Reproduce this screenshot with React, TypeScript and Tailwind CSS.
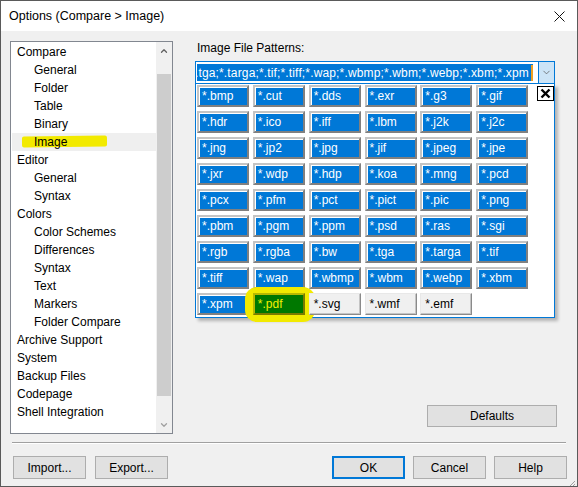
import { ChevronDown, ChevronUp } from "lucide-react";

const font = { fontFamily: '"Liberation Sans", Arial, sans-serif' };

interface TreeItem {
  label: string;
  child?: boolean;
  selected?: boolean;
}

const treeItems: TreeItem[] = [
  { label: "Compare" },
  { label: "General", child: true },
  { label: "Folder", child: true },
  { label: "Table", child: true },
  { label: "Binary", child: true },
  { label: "Image", child: true, selected: true },
  { label: "Editor" },
  { label: "General", child: true },
  { label: "Syntax", child: true },
  { label: "Colors" },
  { label: "Color Schemes", child: true },
  { label: "Differences", child: true },
  { label: "Syntax", child: true },
  { label: "Text", child: true },
  { label: "Markers", child: true },
  { label: "Folder Compare", child: true },
  { label: "Archive Support" },
  { label: "System" },
  { label: "Backup Files" },
  { label: "Codepage" },
  { label: "Shell Integration" },
];

type Kind = "on" | "off" | "pdf";

const patterns: [string, Kind][] = [
  ["*.bmp", "on"], ["*.cut", "on"], ["*.dds", "on"], ["*.exr", "on"], ["*.g3", "on"], ["*.gif", "on"],
  ["*.hdr", "on"], ["*.ico", "on"], ["*.iff", "on"], ["*.lbm", "on"], ["*.j2k", "on"], ["*.j2c", "on"],
  ["*.jng", "on"], ["*.jp2", "on"], ["*.jpg", "on"], ["*.jif", "on"], ["*.jpeg", "on"], ["*.jpe", "on"],
  ["*.jxr", "on"], ["*.wdp", "on"], ["*.hdp", "on"], ["*.koa", "on"], ["*.mng", "on"], ["*.pcd", "on"],
  ["*.pcx", "on"], ["*.pfm", "on"], ["*.pct", "on"], ["*.pict", "on"], ["*.pic", "on"], ["*.png", "on"],
  ["*.pbm", "on"], ["*.pgm", "on"], ["*.ppm", "on"], ["*.psd", "on"], ["*.ras", "on"], ["*.sgi", "on"],
  ["*.rgb", "on"], ["*.rgba", "on"], ["*.bw", "on"], ["*.tga", "on"], ["*.targa", "on"], ["*.tif", "on"],
  ["*.tiff", "on"], ["*.wap", "on"], ["*.wbmp", "on"], ["*.wbm", "on"], ["*.webp", "on"], ["*.xbm", "on"],
  ["*.xpm", "on"], ["*.pdf", "pdf"], ["*.svg", "off"], ["*.wmf", "off"], ["*.emf", "off"],
];

const comboText = patterns
  .filter(([, k]) => k === "on")
  .map(([p]) => p)
  .join(";");

function PatternButton({ label, kind }: { label: string; kind: Kind }) {
  if (kind === "pdf") {
    return (
      <div className="relative h-[22px] w-[52px]">
        <div className="absolute -left-[8px] -right-[10px] -top-[6px] -bottom-[7px] rounded-[12px] bg-[#f2ea00]" />
        <div className="relative flex h-full items-center border-2 border-t-[#b8b800] border-l-[#b8b800] border-r-[#7a7a00] border-b-[#7a7a00] bg-[#007800] pl-[3px] text-[#f0f000]">
          {label}
        </div>
      </div>
    );
  }
  if (kind === "off") {
    return (
      <div className="relative flex h-[22px] w-[52px] items-center border border-t-[#e8e8e8] border-l-[#e8e8e8] border-r-[#8a8a8a] border-b-[#8a8a8a] bg-[#f0f0f0] pl-[4px] text-black shadow-[inset_-1px_-1px_0_#c4c4c4]">
        {label}
      </div>
    );
  }
  return (
    <div className="flex h-[22px] w-[52px] items-center border-2 border-t-[#c4c4c4] border-l-[#c4c4c4] border-r-[#808080] border-b-[#808080] bg-[#0078d7] pl-[3px] text-white shadow-[inset_1px_1px_0_#ffffff]">
      {label}
    </div>
  );
}

function Btn({ label, primary }: { label: string; primary?: boolean }) {
  return (
    <div
      className={`flex h-[23px] w-[73px] items-center justify-center bg-[#e1e1e1] text-black ${
        primary ? "border-2 border-[#0078d7]" : "border border-[#adadad]"
      }`}
    >
      {label}
    </div>
  );
}

export default function App() {
  return (
    <div
      className="flex h-[487px] w-[578px] flex-col overflow-hidden border border-[#5a5a5a] bg-[#f0f0f0] text-[12px] text-black"
      style={font}
    >
      {/* title bar */}
      <div className="flex h-[30px] shrink-0 items-center justify-between bg-white pl-[8px] pr-[11px]">
        <span className="text-[12.5px]">Options (Compare &gt; Image)</span>
        <svg width="11" height="11" viewBox="0 0 11 11" className="mr-px">
          <path d="M0.5 0.5 L10.5 10.5 M10.5 0.5 L0.5 10.5" stroke="#111" strokeWidth="1" />
        </svg>
      </div>

      <div className="flex flex-1 flex-col pl-[9px] pt-[10px]">
        <div className="flex gap-[22px]">
          {/* tree */}
          <div className="flex h-[393px] w-[163px] border border-[#828790] bg-white">
            <div className="flex-1 py-px pl-px">
              {treeItems.map((item, i) => (
                <div
                  key={i}
                  className={`relative flex h-[18px] items-center ${item.child ? "pl-[22px]" : "pl-[5px]"} ${
                    item.selected ? "bg-[#efefef]" : ""
                  }`}
                >
                  {item.selected && (
                    <div className="absolute left-[10px] top-[3px] h-[11px] w-[85px] -rotate-[0.6deg] rounded-[2px] bg-[#f2ea00]" />
                  )}
                  <span className="relative">{item.label}</span>
                </div>
              ))}
            </div>
            <div className="flex w-[16px] flex-col bg-[#f0f0f0]">
              <div className="flex h-[17px] items-center justify-center">
                <ChevronUp className="h-[10px] w-[10px] text-[#606060]" strokeWidth={3} />
              </div>
              <div className="flex-1 px-px pt-[15px] pb-[20px]">
                <div className="h-full bg-[#cdcdcd]" />
              </div>
              <div className="flex h-[17px] items-center justify-center">
                <ChevronDown className="h-[10px] w-[10px] text-[#a0a0a0]" strokeWidth={3} />
              </div>
            </div>
          </div>

          {/* right column */}
          <div className="flex w-[362px] flex-col">
            <div className="h-[14px] pl-[2px] leading-[14px]">Image File Patterns:</div>
            <div className="mt-[6px] flex h-[23px] w-[360px] border border-[#0078d7] bg-white">
              <div className="my-[2px] ml-px flex flex-1 items-center justify-end overflow-hidden bg-[#0078d7] text-white">
                <span className="shrink-0 whitespace-nowrap tracking-[0.15px]">{comboText}</span>
                <span className="ml-[2px] h-[16px] w-[2px] shrink-0 bg-[#f0a020]" />
              </div>
              <div className="ml-[5px] flex w-[16px] items-center justify-center border-l border-[#0078d7] bg-[#cce4f7]">
                <ChevronDown className="h-[11px] w-[11px] text-[#505050]" strokeWidth={1.5} />
              </div>
            </div>

            {/* dropdown */}
            <div className="flex w-[360px] border border-t-0 border-[#0078d7] bg-white pb-[2px] pl-px shadow-[3px_3px_3px_rgba(0,0,0,0.25)]">
              <div className="grid grid-cols-6 gap-x-[4px] gap-y-[4px] pt-[1px]">
                {patterns.map(([p, k]) => (
                  <PatternButton key={p} label={p} kind={k} />
                ))}
              </div>
              <div className="ml-[9px] mt-[2px] flex h-[15px] w-[17px] items-center justify-center border border-black bg-white">
                <svg width="11" height="11" viewBox="0 0 11 11">
                  <path d="M1.5 1.5 L9.5 9.5 M9.5 1.5 L1.5 9.5" stroke="#000" strokeWidth="2.4" />
                </svg>
              </div>
            </div>

            <div className="mb-[7px] mt-auto flex justify-end">
              <div className="flex h-[22px] w-[130px] items-center justify-center border border-[#adadad] bg-[#e1e1e1]">
                Defaults
              </div>
            </div>
          </div>
        </div>

        <div className="mr-[11px] ml-[2px] mt-[8px] border-t border-b border-t-[#a0a0a0] border-b-white" />

        <div className="mt-[12px] flex pl-[3px] pr-[10px]">
          <div className="flex gap-[9px]">
            <Btn label="Import..." />
            <Btn label="Export..." />
          </div>
          <div className="ml-auto flex gap-[8px]">
            <Btn label="OK" primary />
            <Btn label="Cancel" />
            <Btn label="Help" />
          </div>
        </div>
        <div className="flex flex-1 items-end justify-end pb-px pr-px">
          <svg width="10" height="10" viewBox="0 0 10 10">
            <path d="M9 2 L2 9 M9 5 L5 9 M9 8 L8 9" stroke="#a0a0a0" strokeWidth="1" />
          </svg>
        </div>
      </div>
    </div>
  );
}
